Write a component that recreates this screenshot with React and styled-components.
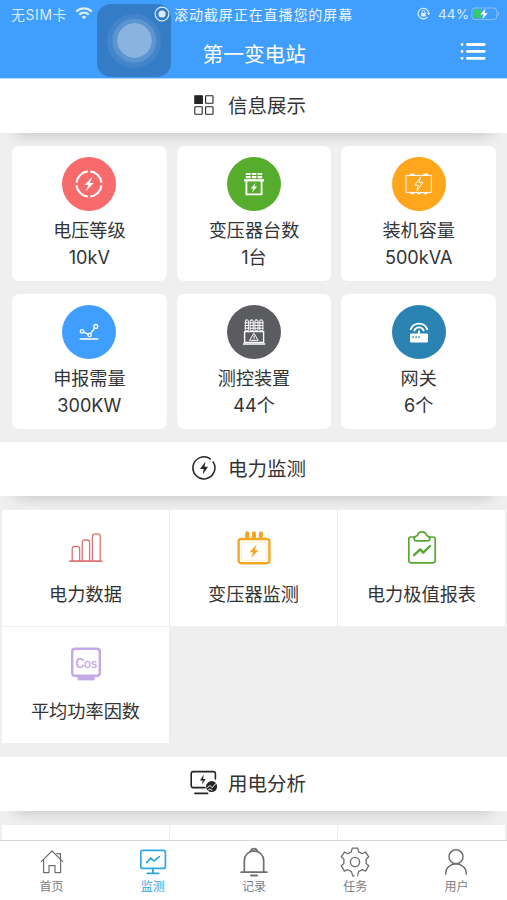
import React from 'react';
import styled, { createGlobalStyle } from 'styled-components';

const SimpleIcon = ({ size = 24, width, height, box = '0 0 24 24', stroke = 1.5, children }) => (
  <svg
    width={width || size}
    height={height || size}
    viewBox={box}
    fill="none"
    stroke="currentColor"
    strokeWidth={stroke}
    strokeLinecap="round"
    strokeLinejoin="round"
  >
    {children}
  </svg>
);

const WifiIcon = () => (
  <SimpleIcon width={18} height={13} box="0 0 18 13" stroke={2.3}>
    <g strokeLinecap="butt">
      <path d="M1.2 4.6 A11 11 0 0 1 16.8 4.6" />
      <path d="M4.2 7.7 A6.8 6.8 0 0 1 13.8 7.7" />
    </g>
    <path d="M6.6 9.9 A3.4 3.4 0 0 1 11.4 9.9 L9 12.3 Z" fill="currentColor" stroke="none" />
  </SimpleIcon>
);

const RecordIcon = () => (
  <SimpleIcon size={16} box="0 0 16 16" stroke={1.2}>
    <circle cx="8" cy="8" r="6.9" />
    <circle cx="8" cy="8" r="3.6" fill="currentColor" stroke="none" />
  </SimpleIcon>
);

const LockIcon = () => (
  <SimpleIcon size={13} box="0 0 13 13" stroke={1.2}>
    <path d="M10.2 10.3 A5.3 5.3 0 1 1 11.7 6.6" />
    <path d="M10.2 6 l1.5 1.5 l1.2 -1.6" strokeWidth="1" />
    <rect x="4.1" y="5.9" width="4.6" height="3.5" rx="0.6" fill="currentColor" stroke="none" />
    <path d="M5 6 V4.9 a1.4 1.4 0 0 1 2.8 0 V6" strokeWidth="0.9" />
  </SimpleIcon>
);

const BatteryIcon = () => (
  <SimpleIcon width={29} height={14} box="0 0 29 14" stroke={1}>
    <rect x="0.8" y="1" width="25" height="11.6" rx="3" opacity="0.45" />
    <path d="M27.3 5 q1.4 1.8 0 3.6" opacity="0.45" />
    <path d="M4 2.6 H11 V11 H4 a1.6 1.6 0 0 1 -1.6 -1.6 V4.2 A1.6 1.6 0 0 1 4 2.6 Z" fill="#35c96d" stroke="none" />
    <path d="M14.6 1.6 L9.2 7.6 h3.3 l-1.3 4.6 L16.8 6 h-3.4 Z" fill="#fff" stroke="none" />
  </SimpleIcon>
);

const ListIcon = () => (
  <SimpleIcon width={26} height={19} box="0 0 26 19" stroke={2.8}>
    <path d="M7.4 2.5 H24.2 M7.4 9.4 H24.2 M7.4 16.3 H24.2" />
    <path d="M2 2.5 h.1 M2 9.4 h.1 M2 16.3 h.1" />
  </SimpleIcon>
);

const GridIcon = () => (
  <SimpleIcon width={20} height={20} box="0 0 20 20" stroke={1.1}>
    <rect x="0.8" y="0.8" width="7.6" height="7.6" fill="currentColor" />
    <rect x="11.6" y="0.8" width="7.4" height="7.4" rx="0.5" />
    <rect x="0.8" y="11.8" width="7.4" height="7.4" rx="0.5" />
    <rect x="11.6" y="11.8" width="7.4" height="7.4" rx="0.5" />
  </SimpleIcon>
);

const PowerIcon = () => (
  <SimpleIcon size={24} stroke={1.5}>
    <path d="M18.3 2.9 A11 11 0 1 0 21.1 5.8" />
    <path d="M13.5 5.5 L8 13 h3.7 L10.8 18.5 L16 10.8 h-3.5 Z" fill="currentColor" stroke="none" />
  </SimpleIcon>
);

const AnalysisIcon = () => (
  <SimpleIcon width={28} height={25} box="0 0 28 25" stroke={1.6}>
    <path d="M15 17.6 H3.2 A2 2 0 0 1 1.2 15.6 V3.6 A2 2 0 0 1 3.2 1.6 H23.4 A2 2 0 0 1 25.4 3.6 V9" />
    <path d="M5 23.4 H17.5" strokeWidth="1.8" />
    <path d="M13.8 4.6 L10 10.4 h2.7 L12 14.4 L15.7 9 h-2.6 Z" fill="currentColor" stroke="none" />
    <circle cx="21.6" cy="16.6" r="5.5" fill="currentColor" stroke="none" />
    <path d="M17.5 17.7 l2.4 -2.2 l2.3 2.2 l3.5 -4 M17.7 20.5 l2 -1.5 l2.3 1.3" stroke="#fff" strokeWidth="1" />
  </SimpleIcon>
);

const VoltageIcon = () => (
  <SimpleIcon size={30} box="0 0 30 30" stroke={2.1}>
    <g strokeLinecap="butt">
      <path d="M16.2 2.4 A12.6 12.6 0 0 1 27.5 13.6" />
      <path d="M27.5 16.4 A12.6 12.6 0 0 1 16.2 27.6" />
      <path d="M13.8 27.6 A12.6 12.6 0 0 1 2.5 16.4" />
      <path d="M2.5 13.6 A12.6 12.6 0 0 1 13.8 2.4" />
    </g>
    <path d="M18.4 7.8 L10.4 16 h4 L11.6 22.4 L19.7 14 h-3.9 Z" fill="currentColor" stroke="none" />
  </SimpleIcon>
);

const TransformerIcon = () => (
  <SimpleIcon width={24} height={26} box="0 0 24 26" stroke={1.8}>
    <g strokeLinecap="butt">
      <path d="M3.8 3 H8.6 M9.8 3 H14.3 M15.5 3 H20.2" strokeWidth="2.2" />
      <path d="M3.8 6.2 H8.6 M9.8 6.2 H14.3 M15.5 6.2 H20.2" strokeWidth="2.2" />
      <path d="M2 9.3 H22" strokeWidth="2.2" />
      <path d="M4.4 10 V23.4 H19.6 V10" />
    </g>
    <path d="M13.5 11.8 L8.8 17.4 h2.5 L10 21.6 L15.2 15.6 h-2.8 Z" fill="currentColor" stroke="none" />
  </SimpleIcon>
);

const CapacityIcon = () => (
  <SimpleIcon width={28} height={24} box="0 0 28 24" stroke={1}>
    <rect x="1.4" y="3.4" width="25" height="17" />
    <path d="M5.5 2.3 h3.5 M19 2.3 h3.5 M6 21.6 h3 M12.5 21.6 h3 M19 21.6 h3" strokeWidth="1.4" />
    <path d="M15.5 5.2 L9.8 13.2 h3.4 L12 18.7 L18 10.4 h-3.6 Z" />
  </SimpleIcon>
);

const DemandIcon = () => (
  <SimpleIcon width={20} height={18} box="0 0 20 18" stroke={1.3}>
    <circle cx="3" cy="8.4" r="1.7" />
    <circle cx="10.6" cy="12" r="1.7" />
    <circle cx="16.8" cy="3.4" r="1.9" />
    <path d="M4.6 9.2 L9.1 11.2 M11.6 10.6 L15.7 5" />
    <path d="M1.3 16 H18.8" strokeWidth="1.6" />
  </SimpleIcon>
);

const DeviceIcon = () => (
  <SimpleIcon width={24} height={28} box="0 0 24 28" stroke={1}>
    {[3.4, 8.2, 13, 17.8].map(x => (
      <g key={x}>
        <rect x={x} y="2" width="3" height="10.8" rx="1" />
        <path d={`M${x - 0.4} 4.8 h3.8 M${x - 0.4} 7.5 h3.8 M${x - 0.4} 10.2 h3.8`} />
      </g>
    ))}
    <path d="M2.6 13.5 H21.6 V24.4 H2.6 Z M1.4 26 H22.8" strokeWidth="1.4" />
    <path d="M12.1 15.6 L16.2 22.3 H8 Z M12.1 18 v2 M12.1 21.1 v.1" />
  </SimpleIcon>
);

const GatewayIcon = () => (
  <SimpleIcon width={20} height={24} box="0 0 20 24" stroke={1.9}>
    <path d="M1.8 9.2 A8.8 8.8 0 0 1 18.2 9.2" />
    <path d="M5.4 10.4 A5 5 0 0 1 14.6 10.4" />
    <path d="M10 11.2 V14" />
    <rect x="1" y="13.4" width="18" height="9" rx="1" fill="currentColor" stroke="none" />
    <path d="M4 17 h.2 M7 17 h.2 M10 17 h.2" stroke="#2b83b4" strokeWidth="1.7" />
  </SimpleIcon>
);

const BarsIcon = () => (
  <SimpleIcon width={34} height={34} box="0 0 34 34" stroke={1.3}>
    <path d="M1 31.2 H32.6" strokeWidth="1.8" />
    <path d="M3.2 31 V19 a2.6 2.6 0 0 1 2.6 -2.6 h2.2 A2.6 2.6 0 0 1 10.6 19 V31" />
    <path d="M13.2 31 V12.6 a2.6 2.6 0 0 1 2.6 -2.6 h2.2 a2.6 2.6 0 0 1 2.6 2.6 V31" />
    <path d="M23.4 31 V6.4 A2.6 2.6 0 0 1 26 3.8 h2.6 a2.6 2.6 0 0 1 2.6 2.6 V31" />
  </SimpleIcon>
);

const MonitorBoxIcon = () => (
  <SimpleIcon width={36} height={36} box="0 0 36 36" stroke={2.4}>
    <rect x="2.6" y="10" width="30.8" height="24.2" rx="2.6" />
    <rect x="6" y="13.2" width="24" height="18" strokeWidth="0.5" opacity="0.45" />
    <path d="M11.2 4.2 V8 M18 4.2 V8 M24.9 4.2 V8" strokeWidth="4" />
    <path d="M20.6 15.6 L13.4 23.2 h3.7 L15 29 L22.6 21.2 h-3.8 Z" fill="currentColor" stroke="none" />
  </SimpleIcon>
);

const ReportIcon = () => (
  <SimpleIcon width={32} height={36} box="0 0 32 36" stroke={1.7}>
    <path d="M9.2 8 H5 A2.2 2.2 0 0 0 2.8 10.2 V31.6 A2.2 2.2 0 0 0 5 33.8 H27 A2.2 2.2 0 0 0 29.2 31.6 V10.2 A2.2 2.2 0 0 0 27 8 H22.8" />
    <path d="M11.2 11.8 A2.4 2.4 0 0 1 9.8 7.2 L11.4 6.4 A4.8 4.8 0 0 1 20.6 6.4 L22.2 7.2 A2.4 2.4 0 0 1 20.8 11.8 Z" />
    <path d="M8 26.2 L14.2 20.4 L17.2 23.6 L24 17" strokeWidth="2.4" />
  </SimpleIcon>
);

const CosIcon = () => (
  <SimpleIcon width={32} height={36} box="0 0 32 36" stroke={2.4}>
    <rect x="2.2" y="2.8" width="27.6" height="27" rx="2.8" />
    <path d="M8 31 H24.4 L24 34 H8.4 Z" fill="currentColor" strokeWidth="0.8" />
    <CosText x="16" y="22.4"><CosCapital>C</CosCapital>os</CosText>
  </SimpleIcon>
);

const HomeIcon = () => (
  <SimpleIcon width={24} height={26} box="0 0 24 26" stroke={1.2}>
    <path d="M1.2 12.6 L12 2 L22.8 12.6" />
    <path d="M3.6 11 V23.6 H9 V16.6 H15 V23.6 H20.6 V11" />
    <path d="M16.8 4.6 H20.4 V9.6" />
  </SimpleIcon>
);

const MonitorIcon = () => (
  <SimpleIcon width={28} height={28} box="0 0 28 28" stroke={1.7}>
    <rect x="1.8" y="2.4" width="24.6" height="18" rx="2" />
    <path d="M13.9 20.5 V24.6 M8.2 25.4 H19.6" strokeWidth="1.8" />
    <path d="M7.6 14.6 L11.8 10 L14.8 13 L20.4 8.6" />
  </SimpleIcon>
);

const BellIcon = () => (
  <SimpleIcon width={28} height={32} box="0 0 28 32" stroke={1.7}>
    <path d="M1.2 26.2 H26.8" />
    <path d="M4.3 26 V14.6 A9.7 9.7 0 0 1 23.7 14.6 V26" />
    <path d="M10.8 5.2 A3.3 3.3 0 0 1 17.2 5.2" />
    <path d="M11 29.5 H17" strokeWidth="1.9" />
  </SimpleIcon>
);

const GearIcon = () => (
  <SimpleIcon width={30} height={32} box="0 0 30 32" stroke={1.3}>
    <path d="M12.8 29.8 L11.4 25.6 L7.8 23.7 L4.4 25.2 L1.2 19.7 L3.9 17.5 V13.2 L1.2 10.8 L4.6 6 L7.7 7.7 L11.4 5.8 L12.2 2.2 H17.8 L18.6 5.8 L22.3 7.7 L25.4 6 L28.8 10.8 L26.1 13.2 V17.5 L28.8 19.7 L25.6 25.2 L22.3 23.7 L18.6 25.6 L17.9 28.6" />
    <path d="M12.8 29.8 h1.2 M17.4 29.8 h.3" />
    <circle cx="15" cy="16" r="4.6" strokeWidth="1.4" />
  </SimpleIcon>
);

const UserIcon = () => (
  <SimpleIcon width={24} height={28} box="0 0 24 28" stroke={1.5}>
    <circle cx="12" cy="8.8" r="7" />
    <path d="M1.8 26 V25 A10.2 9.2 0 0 1 22.2 25 V26" />
  </SimpleIcon>
);

const infos = [
  { name: '电压等级', value: '10kV', color: '#f86b6c', Icon: VoltageIcon },
  { name: '变压器台数', value: '1台', color: '#56ac2c', Icon: TransformerIcon },
  { name: '装机容量', value: '500kVA', color: '#ffa61c', Icon: CapacityIcon },
  { name: '申报需量', value: '300KW', color: '#409eff', Icon: DemandIcon },
  { name: '测控装置', value: '44个', color: '#5b5c60', Icon: DeviceIcon },
  { name: '网关', value: '6个', color: '#2b83b4', Icon: GatewayIcon },
];

const monitors = [
  { name: '电力数据', color: '#dc7476', Icon: BarsIcon },
  { name: '变压器监测', color: '#f6a623', Icon: MonitorBoxIcon },
  { name: '电力极值报表', color: '#57a832', Icon: ReportIcon },
  { name: '平均功率因数', color: '#c3a8e6', Icon: CosIcon },
];

const tabs = [
  { name: '首页', Icon: HomeIcon },
  { name: '监测', Icon: MonitorIcon, active: true },
  { name: '记录', Icon: BellIcon },
  { name: '任务', Icon: GearIcon },
  { name: '用户', Icon: UserIcon },
];

const Section = ({ Icon, title }) => (
  <SectionBar>
    <SectionIcon><Icon /></SectionIcon>
    <SectionTitle>{title}</SectionTitle>
  </SectionBar>
);

const App = () => (<Phone>
  <GlobalStyle />
  <Header>
    <AssistiveTouch><Ring><Knob /></Ring></AssistiveTouch>
    <StatusBar>
      <Carrier>无SIM卡</Carrier>
      <WifiIcon />
      <Recording>
        <RecordIcon />
        <RecordingText>滚动截屏正在直播您的屏幕</RecordingText>
      </Recording>
      <Power>
        <LockIcon />
        <Percent>44%</Percent>
        <BatteryIcon />
      </Power>
    </StatusBar>
    <NavBar>
      <NavTitle>第一变电站</NavTitle>
      <ListIcon />
    </NavBar>
  </Header>
  <Content>
    <Section Icon={GridIcon} title="信息展示" />
    <InfoGrid>
      {infos.map(({ name, value, color, Icon }) => (
        <InfoCard key={name}>
          <Circle $color={color}><Icon /></Circle>
          <InfoText>{name}</InfoText>
          <InfoText>{value}</InfoText>
        </InfoCard>
      ))}
    </InfoGrid>
    <Section Icon={PowerIcon} title="电力监测" />
    <MenuGrid>
      {monitors.map(({ name, color, Icon }) => (
        <MenuCell key={name}>
          <MenuIcon $color={color}><Icon /></MenuIcon>
          <MenuText>{name}</MenuText>
        </MenuCell>
      ))}
    </MenuGrid>
    <Section Icon={AnalysisIcon} title="用电分析" />
    <MenuGrid>
      <MenuCell />
      <MenuCell />
      <MenuCell />
    </MenuGrid>
  </Content>
  <TabBar>
    {tabs.map(({ name, Icon, active }) => (
      <Tab key={name} $active={active}>
        <TabIcon $active={active}><Icon /></TabIcon>
        <TabText>{name}</TabText>
      </Tab>
    ))}
  </TabBar>
</Phone>)

const GlobalStyle = createGlobalStyle`
  * {
    box-sizing: border-box;
  }
  body {
    margin: 0;
    font-family: Inter, "Noto Sans CJK SC", sans-serif;
  }
  svg {
    display: block;
    flex: none;
  }
`;

const Phone = styled.div`
  display: flex;
  flex-direction: column;
  width: 507px;
  height: 900px;
  overflow: hidden;
  background: #efefef;
  color: #333;
`;

const Header = styled.header`
  position: relative;
  flex: none;
  height: 79px;
  background: #409eff;
  border-bottom: 1px solid #b5dbff;
  color: #fff;
`;

const AssistiveTouch = styled.div`
  position: absolute;
  left: 97px;
  top: 4px;
  width: 74px;
  height: 73px;
  border-radius: 14px;
  background: #357cc6;
  display: flex;
  align-items: center;
  justify-content: center;
`;

const Ring = styled.div`
  width: 54px;
  height: 54px;
  border-radius: 50%;
  background: #4c8bcc;
  border: 4px solid #4384ca;
  background-clip: padding-box;
  display: flex;
  align-items: center;
  justify-content: center;
`;

const Knob = styled.div`
  flex: none;
  width: 43px;
  height: 43px;
  border-radius: 50%;
  background: #8ab3df;
  border: 4px solid #5c96d2;
  background-clip: padding-box;
`;

const StatusBar = styled.div`
  position: relative;
  display: flex;
  align-items: center;
  height: 28px;
  padding: 0 7px 1px 11px;
  font-size: 14px;
  color: #dcecff;
`;

const Carrier = styled.span`
  width: 64px;
  font-size: 13.8px;
  letter-spacing: 0.7px;
  white-space: nowrap;
`;

const Recording = styled.div`
  display: flex;
  align-items: center;
  gap: 4px;
  margin-left: 61px;
`;

const RecordingText = styled.span`
  font-size: 14px;
  letter-spacing: 0.93px;
  white-space: nowrap;
  color: #eef6ff;
`;

const Power = styled.div`
  display: flex;
  align-items: center;
  margin-left: auto;
`;

const Percent = styled.span`
  width: 33px;
  margin-left: 8px;
  font-size: 13.5px;
  letter-spacing: 0.1px;
`;

const NavBar = styled.div`
  display: flex;
  align-items: center;
  justify-content: flex-end;
  height: 50px;
  padding: 0 21px 4px;
`;

const NavTitle = styled.h1`
  margin: 7px 154px 0 0;
  font-size: 20.7px;
  font-weight: 400;
  line-height: 30px;
`;

const Content = styled.main`
  flex: 1;
  min-height: 0;
  overflow: hidden;
`;

const SectionBar = styled.div`
  display: flex;
  align-items: center;
  justify-content: center;
  height: 54px;
  padding-right: 12px;
  background: #fff;
  box-shadow: 0 16px 16px -16px rgba(0, 0, 0, 0.22);
`;

const SectionIcon = styled.div`
  display: flex;
  justify-content: center;
  width: 28px;
  margin-right: 11px;
  padding: 0 0 3px 2px;
  color: #252525;
`;

const SectionTitle = styled.h2`
  margin: 1px 0 0;
  font-size: 19.5px;
  font-weight: 400;
  line-height: 29px;
`;

const InfoGrid = styled.div`
  display: grid;
  grid-template-columns: repeat(3, 1fr);
  gap: 13px 10px;
  padding: 13px 11px 13px 12px;
`;

const InfoCard = styled.div`
  display: flex;
  flex-direction: column;
  align-items: center;
  height: 135px;
  padding-top: 11px;
  border-radius: 7px;
  background: #fff;
`;

const Circle = styled.div`
  display: flex;
  align-items: center;
  justify-content: center;
  width: 54px;
  height: 54px;
  margin-bottom: 6px;
  border-radius: 50%;
  background: ${props => props.$color};
  color: #fff;
`;

const InfoText = styled.div`
  font-size: 18.1px;
  line-height: 27px;
`;

const MenuGrid = styled.div`
  display: grid;
  grid-template-columns: repeat(3, 1fr);
  gap: 1px;
  padding: 14px 2px;
`;

const MenuCell = styled.div`
  display: flex;
  flex-direction: column;
  align-items: center;
  height: 116px;
  padding-top: 18px;
  background: #fff;
`;

const MenuIcon = styled.div`
  display: flex;
  align-items: center;
  height: 38px;
  margin-bottom: 15px;
  color: ${props => props.$color};
`;

const MenuText = styled.div`
  font-size: 18.2px;
  line-height: 27px;
`;

const CosText = styled.text`
  font-family: "Liberation Mono", monospace;
  font-size: 12px;
  letter-spacing: -0.8px;
  text-anchor: middle;
  fill: currentColor;
  stroke: currentColor;
  stroke-width: 0.3px;
`;

const CosCapital = styled.tspan`
  font-size: 15.5px;
`;

const TabBar = styled.nav`
  display: flex;
  flex: none;
  height: 60px;
  padding-left: 1px;
  border-top: 1px solid #d9d9d9;
  background: #fff;
`;

const Tab = styled.div`
  display: flex;
  flex: 1;
  flex-direction: column;
  align-items: center;
  padding-top: 5px;
  color: ${props => (props.$active ? '#2fa7e4' : '#7d8083')};
`;

const TabIcon = styled.div`
  display: flex;
  align-items: center;
  height: 32px;
  color: ${props => (props.$active ? '#2fa7e4' : '#6c6f72')};
`;

const TabText = styled.div`
  font-size: 12px;
  line-height: 18px;
`;

export default App;
